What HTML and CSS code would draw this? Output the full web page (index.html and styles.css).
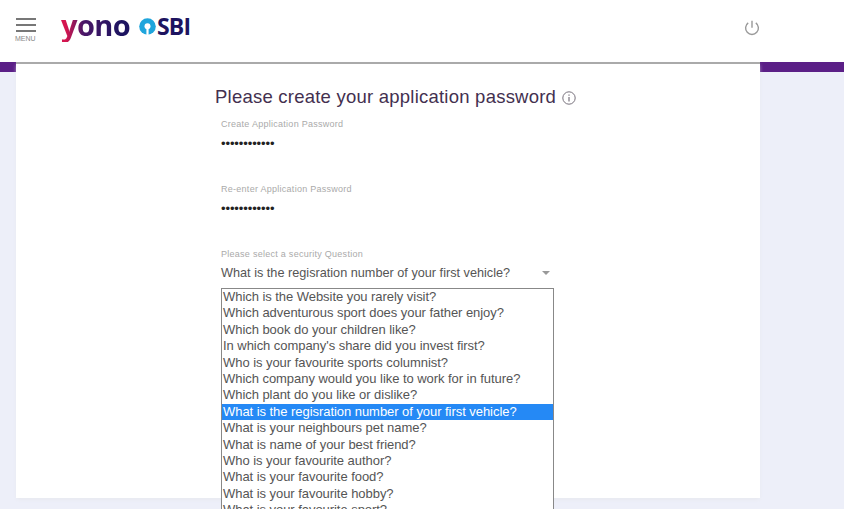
FILE: index.html
```
<!DOCTYPE html>
<html lang="en">
<head>
    <meta charset="UTF-8">
    <meta name="viewport" content="width=device-width, initial-scale=1.0">
    <title>YONO SBI</title>
    <link rel="stylesheet" href="styles.css">
</head>

<body>
    <header class="navbar">
        <div class="menu">
            <span class="bar"></span>
            <span class="bar"></span>
            <span class="bar"></span>
            <span class="menu-text">MENU</span>
        </div>
        <div class="yono">yono</div>
        <svg class="sbi-icon" width="17" height="17" viewBox="0 0 17 17">
            <circle cx="8.5" cy="8.5" r="8.3" fill="#1fa5dc"/>
            <circle cx="8.5" cy="8.3" r="3" fill="#fff"/>
            <path d="M7.4 9h2.2v8H7.4z" fill="#fff"/>
        </svg>
        <div class="sbi">SBI</div>
        <svg class="power" width="16" height="16" viewBox="0 0 16 16" fill="none" stroke="#999" stroke-width="1.4">
            <path d="M4.2 2.9a6.4 6.4 0 1 0 7.6 0M8 .8v7"/>
        </svg>
    </header>

    <div class="page">
        <main class="card">
            <h1>Please create your application password
                <svg class="info" width="14" height="14" viewBox="0 0 14 14" fill="none" stroke="#77717c">
                    <circle cx="7" cy="7" r="6.2"/>
                    <path d="M7 6v4.5M7 3.5v1.3" stroke-width="1.2"/>
                </svg>
            </h1>

            <div class="field">
                <div class="label">Create Application Password</div>
                <div class="dots">••••••••••••</div>
            </div>
            <div class="field">
                <div class="label">Re-enter Application Password</div>
                <div class="dots">••••••••••••</div>
            </div>
            <div class="field">
                <div class="label">Please select a security Question</div>
                <div class="selected">
                    <span>What is the regisration number of your first vehicle?</span>
                    <span class="arrow"></span>
                </div>
                <ul class="options">
                    <li>Which is the Website you rarely visit?</li>
                    <li>Which adventurous sport does your father enjoy?</li>
                    <li>Which book do your children like?</li>
                    <li>In which company's share did you invest first?</li>
                    <li>Who is your favourite sports columnist?</li>
                    <li>Which company would you like to work for in future?</li>
                    <li>Which plant do you like or dislike?</li>
                    <li class="active">What is the regisration number of your first vehicle?</li>
                    <li>What is your neighbours pet name?</li>
                    <li>What is name of your best friend?</li>
                    <li>Who is your favourite author?</li>
                    <li>What is your favourite food?</li>
                    <li>What is your favourite hobby?</li>
                    <li>What is your favourite sport?</li>
                </ul>
            </div>
        </main>
    </div>
</body>
</html>
```

FILE: styles.css
```
* {
    box-sizing: border-box;
}

body {
    margin: 0;
    height: 509px;
    overflow: hidden;
    background: #fff;
    font-family: "Liberation Sans", Arial, sans-serif;
    color: #555;
}

.navbar {
    display: flex;
    align-items: flex-start;
    width: 844px;
    height: 62px;
    padding: 0 84px 0 15px;
}

.menu {
    display: flex;
    flex-direction: column;
    gap: 4px;
    width: 22px;
    margin-top: 18px;
}

.bar {
    height: 2px;
    margin-left: 1px;
    width: 20px;
    background: #777;
}

.menu-text {
    margin-top: -1px;
    font-size: 7px;
    line-height: 8px;
    color: #888;
}

.yono {
    margin: 8px 0 0 24px;
    width: 78px;
    font: bold 29px/34px "Open Sans", sans-serif;
    letter-spacing: -0.6px;
    background: linear-gradient(90deg, #d5164f 5px, #4a1768 22px, #1d1460 60px);
    -webkit-background-clip: text;
    background-clip: text;
    color: transparent;
}

.sbi-icon {
    margin-top: 18px;
}

.sbi {
    margin: 11px 0 0 1px;
    font: bold 23px/30px "Open Sans", sans-serif;
    letter-spacing: -0.8px;
    color: #1d1460;
}

.power {
    margin: 20px 0 0 auto;
}

.page {
    width: 844px;
    height: 447px;
    padding: 0 84px 0 16px;
    background: linear-gradient(#5b1f87 10px, #edeff9 10px);
}

.card {
    height: 436px;
    padding: 22px 0 0 199px;
    border-top: 2px solid #aaa;
    background: #fff;
    box-shadow: 0 2px 4px -1px #e6e7ec;
}

h1 {
    display: flex;
    align-items: center;
    gap: 6px;
    margin: 0;
    font-size: 18.5px;
    line-height: 22px;
    font-weight: normal;
    letter-spacing: 0.23px;
    color: #43304f;
}

.info {
    margin-top: 2px;
}

.field {
    width: 333px;
    height: 65px;
    margin-left: 6px;
    padding-top: 10px;
}

.label {
    font-size: 9px;
    line-height: 12px;
    letter-spacing: 0.27px;
    color: #aaa;
}

.dots {
    margin-top: 6px;
    font-size: 13px;
    line-height: 16px;
    letter-spacing: -0.1px;
    color: #222;
}

.selected {
    display: flex;
    justify-content: space-between;
    align-items: center;
    padding-right: 4px;
    margin-top: 5px;
    font-size: 12.7px;
    line-height: 16px;
}

.arrow {
    border: 4px solid transparent;
    border-top: 4px solid #999;
    border-bottom: 0;
}

.options {
    list-style: none;
    margin: 7px 0 0;
    padding: 0;
    border: 1px solid #888;
    background: #fff;
}

.options li {
    padding-left: 1px;
    font-size: 13px;
    line-height: 16.4px;
    letter-spacing: -0.05px;
    white-space: nowrap;
}

.options .active {
    background: #2589f5;
    color: #fff;
}
```
